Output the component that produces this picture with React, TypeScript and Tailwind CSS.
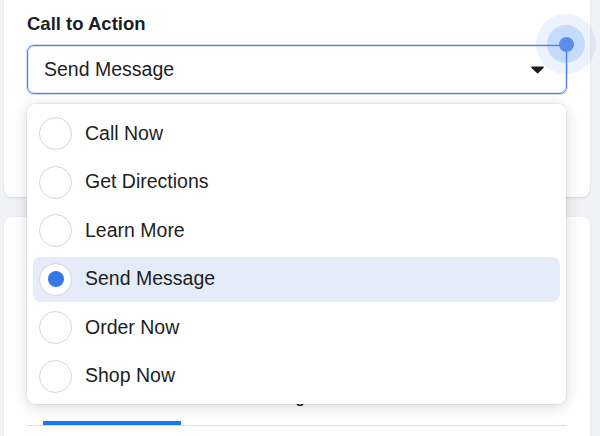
import React, { useState } from 'react';

const options = ['Call Now', 'Get Directions', 'Learn More', 'Send Message', 'Order Now', 'Shop Now'];

const Caret: React.FC = () => (
  <svg width="13" height="8" viewBox="0 0 13 8" className="text-[#1c1e21]">
    <path d="M1.2 0.5h10.6c0.9 0 1.3 1 0.7 1.6L7.3 7.1c-0.4 0.4-1.1 0.4-1.5 0L0.5 2.1C-0.1 1.5 0.3 0.5 1.2 0.5z" fill="currentColor" />
  </svg>
);

const App: React.FC = () => {
  const [selected, setSelected] = useState('Send Message');

  return (
    <div
      className="relative w-[600px] h-[436px] overflow-hidden bg-[#f0f2f5] pl-[4px] pr-[10px]"
      style={{ fontFamily: '"Liberation Sans", Helvetica, Arial, sans-serif' }}
    >
      {/* first card: call to action */}
      <div className="h-[197px] bg-white rounded-b-lg shadow-[0_1px_2px_rgba(0,0,0,0.12)] px-[23px] pt-[12px]">
        <div className="text-[18.5px] leading-[24px] font-bold text-[#1c1e21]">Call to Action</div>
        <div className="relative mt-[9px] h-[49px] flex items-center justify-between rounded-[7px] border border-[#4a82ea] shadow-[0_0_0_1px_#d3e0fa,inset_0_0_0_1px_#dfe8fb] pl-[16px] pr-[22px]">
          <span className="text-[19.5px] text-[#1c1e21]">{selected}</span>
          <Caret />
          {/* touch indicator */}
          <div className="absolute -right-[30px] -top-[32px] w-[60px] h-[60px] rounded-full bg-[rgba(66,133,244,0.1)] flex items-center justify-center">
            <div className="w-[38px] h-[38px] rounded-full bg-[rgba(66,133,244,0.22)] flex items-center justify-center">
              <div className="w-[15px] h-[15px] rounded-full bg-[#5a8ee8]" />
            </div>
          </div>
        </div>
      </div>

      {/* second card with tabs */}
      <div className="mt-[20px] h-[260px] bg-white rounded-t-lg shadow-[0_1px_2px_rgba(0,0,0,0.12)] px-[23px]">
        <div className="h-[171px]" />
        <div className="flex border-b border-[#dadde1] text-[15px] leading-[20px] font-bold text-[#1c1e21]">
          <div className="ml-[16px] w-[138px] flex flex-col items-center">
            <span className="pb-[13px]">Preview</span>
            <div className="h-[4px] w-full bg-[#1877f2]" />
          </div>
          <div className="pl-[62px]">Greeting</div>
        </div>
      </div>

      {/* dropdown menu */}
      <div className="absolute left-[27px] top-[104px] w-[539px] h-[300px] bg-white rounded-lg shadow-[0_2px_14px_rgba(0,0,0,0.16),0_0_0_1px_rgba(0,0,0,0.04)] px-[6px] pt-[7px] flex flex-col gap-[3.5px]">
        {options.map((option) => {
          const isSelected = option === selected;
          return (
            <button
              key={option}
              onClick={() => setSelected(option)}
              className={`h-[45px] shrink-0 flex items-center rounded-lg pl-[6px] text-left ${isSelected ? 'bg-[#e5ecf9]' : 'bg-white'}`}
            >
              <span className="w-[33px] h-[33px] rounded-full border-[1.5px] border-[#d6d6d6] bg-white flex items-center justify-center">
                {isSelected && <span className="w-[16px] h-[16px] rounded-full bg-[#3578e5]" />}
              </span>
              <span className="ml-[13px] text-[19.5px] text-[#1c1e21]">{option}</span>
            </button>
          );
        })}
      </div>
    </div>
  );
};

export default App;
